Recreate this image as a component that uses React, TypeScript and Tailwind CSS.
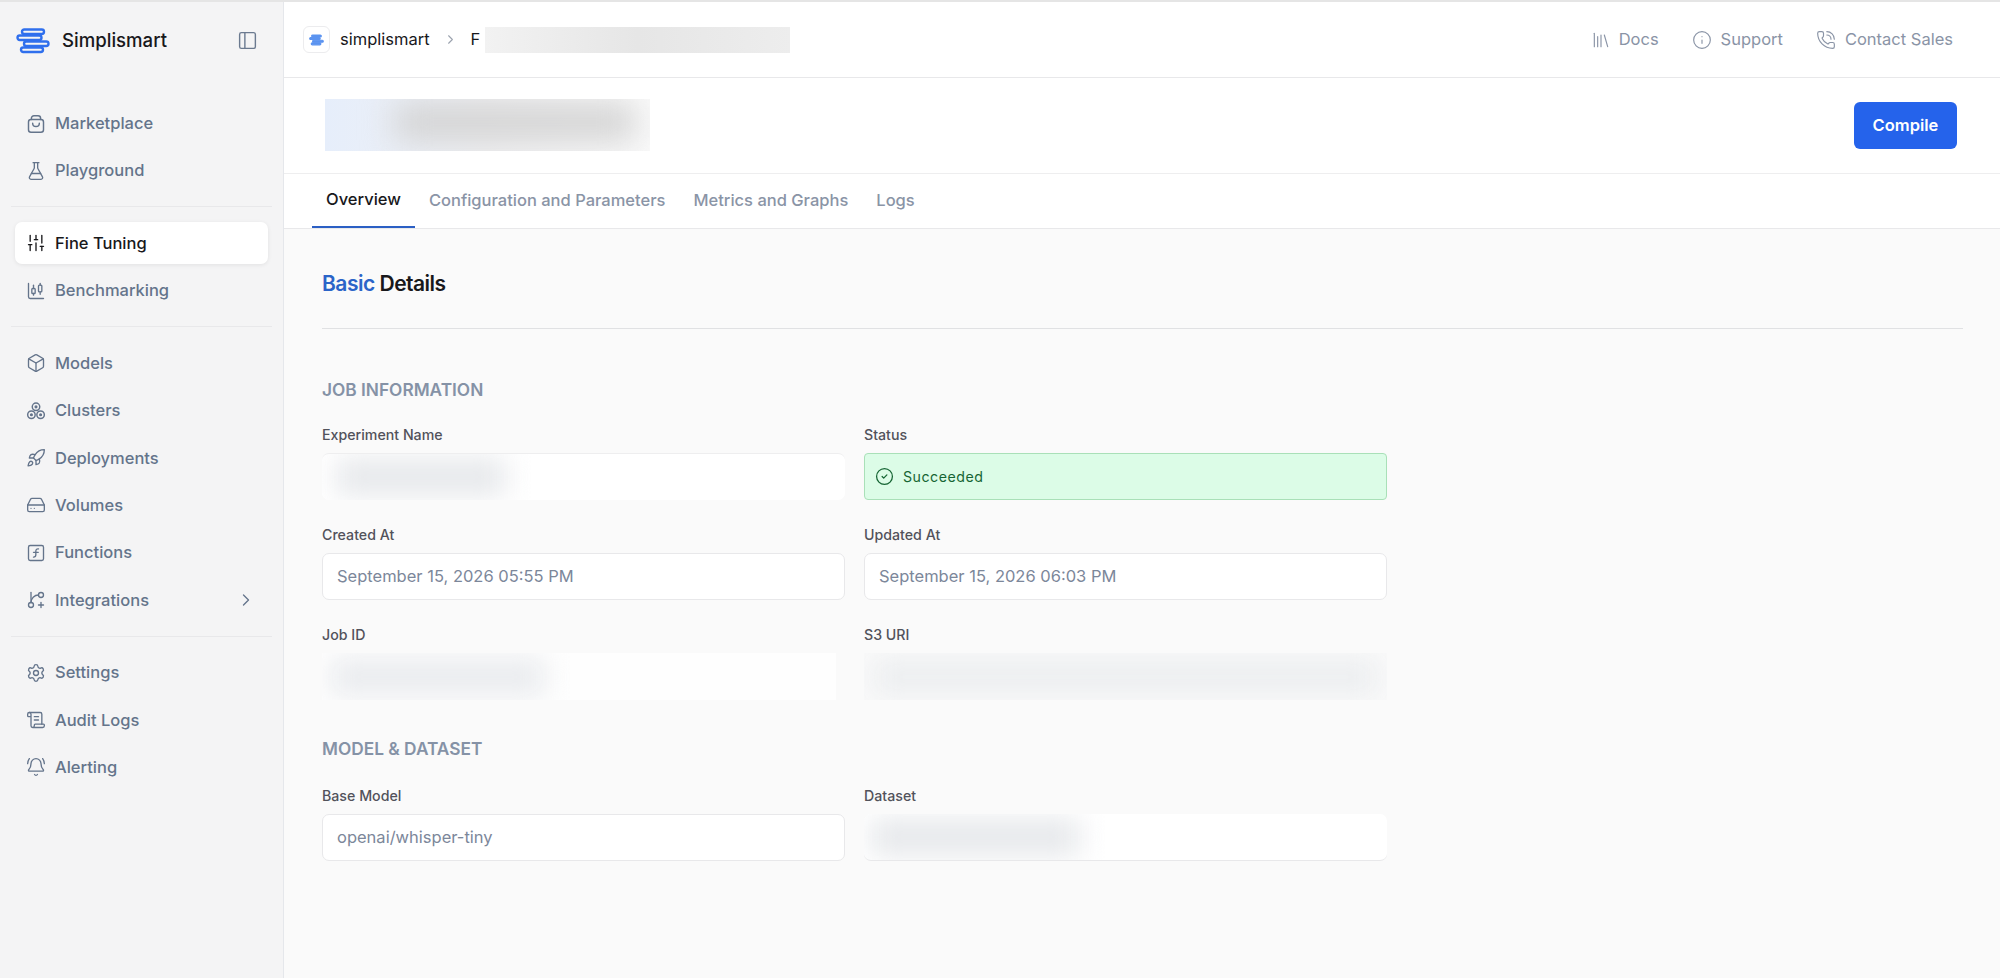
import React from 'react';
import {
  BellRing,
  Box,
  ChartCandlestick,
  ChevronRight,
  CircleCheck,
  FlaskConical,
  GitBranchPlus,
  HardDrive,
  Info,
  Library,
  PanelLeft,
  PhoneCall,
  Rocket,
  ScrollText,
  Settings,
  SlidersVertical,
  SquareFunction,
} from 'lucide-react';

const font = 'font-["Inter",sans-serif]';

const Logo = ({ small }: { small?: boolean }) => (
  <svg
    viewBox="0 0 34 26"
    className={small ? 'w-[15px] h-[12px]' : 'w-[34px] h-[26px]'}
    fill={small ? '#5b93f0' : 'none'}
    stroke={small ? '#5b93f0' : '#2f6fed'}
    strokeWidth="2.4"
  >
    <rect x="6" y="1.5" width="22" height="4.5" rx="2.25" />
    <rect x="1.5" y="7.5" width="24" height="4.5" rx="2.25" />
    <rect x="8" y="13.5" width="24.5" height="4.5" rx="2.25" />
    <rect x="5" y="19.5" width="22" height="4.5" rx="2.25" />
  </svg>
);

const BagIcon = ({ className }: { className?: string }) => (
  <svg viewBox="0 0 24 24" className={className} fill="none" stroke="currentColor" strokeWidth="1.75" strokeLinecap="round" strokeLinejoin="round">
    <path d="M6.5 6.5V5A3 3 0 0 1 9.5 2h5a3 3 0 0 1 3 3v1.5" />
    <rect x="3" y="6.5" width="18" height="15.5" rx="3" />
    <path d="M8 11a4 4 0 0 0 8 0" />
  </svg>
);

const ClusterIcon = ({ className }: { className?: string }) => (
  <svg viewBox="0 0 24 24" className={className} fill="none" stroke="currentColor" strokeWidth="1.75" strokeLinecap="round" strokeLinejoin="round">
    <circle cx="12" cy="7" r="4.5" />
    <circle cx="6.5" cy="16.5" r="4.5" />
    <circle cx="17.5" cy="16.5" r="4.5" />
    <circle cx="12" cy="7" r="1" />
    <circle cx="6.5" cy="16.5" r="1" />
    <circle cx="17.5" cy="16.5" r="1" />
  </svg>
);

type IconType = React.ComponentType<{ className?: string; strokeWidth?: number }>;

const groups: { label: string; icon: IconType; active?: boolean; arrow?: boolean }[][] = [
  [
    { label: 'Marketplace', icon: BagIcon },
    { label: 'Playground', icon: FlaskConical },
  ],
  [
    { label: 'Fine Tuning', icon: SlidersVertical, active: true },
    { label: 'Benchmarking', icon: ChartCandlestick },
  ],
  [
    { label: 'Models', icon: Box },
    { label: 'Clusters', icon: ClusterIcon },
    { label: 'Deployments', icon: Rocket },
    { label: 'Volumes', icon: HardDrive },
    { label: 'Functions', icon: SquareFunction },
    { label: 'Integrations', icon: GitBranchPlus, arrow: true },
  ],
  [
    { label: 'Settings', icon: Settings },
    { label: 'Audit Logs', icon: ScrollText },
    { label: 'Alerting', icon: BellRing },
  ],
];

const Sidebar = () => (
  <aside className="w-[284px] shrink-0 bg-[#f4f4f5] border-r border-[#e5e7eb] flex flex-col">
    <div className="h-[77px] flex items-center pl-[16px] pr-[25px]">
      <Logo />
      <span className="ml-[12px] text-[18.6px] font-medium text-[#18181b]">Simplismart</span>
      <PanelLeft className="ml-auto w-[21px] h-[21px] text-[#6b7a90]" strokeWidth={1.6} />
    </div>
    <nav className="pt-[23.5px] px-[11px] flex flex-col gap-[14.5px]">
      {groups.map((items, i) => (
        <div key={i} className={`flex flex-col gap-[5.35px] ${i > 0 ? 'border-t border-[#e8e8ea] pt-[15.1px]' : ''}`}>
          {items.map((item) => {
            const Icon = item.icon;
            return (
              <div
                key={item.label}
                className={`h-[42px] mx-[4px] px-[11px] rounded-[7px] flex items-center gap-[9px] text-[16.5px] font-medium ${
                  item.active ? 'bg-white shadow-[0_1px_4px_rgba(0,0,0,0.08)] text-[#18181b]' : 'text-[#64748b]'
                }`}
              >
                <Icon className="w-[20px] h-[20px] shrink-0" strokeWidth={1.6} />
                <span>{item.label}</span>
                {item.arrow && <ChevronRight className="ml-auto mr-[1px] w-[20px] h-[20px]" strokeWidth={1.6} />}
              </div>
            );
          })}
        </div>
      ))}
    </nav>
  </aside>
);

const TopBar = () => (
  <header className="h-[76px] shrink-0 bg-white border-b border-[#e8e8ea] flex items-center pl-[19px] pr-[47px]">
    <div className="w-[27px] h-[27px] rounded-[6px] border border-[#ececee] flex items-center justify-center">
      <Logo small />
    </div>
    <span className="ml-[10px] text-[16.5px] text-[#18181b]">simplismart</span>
    <ChevronRight className="ml-[13.5px] w-[15px] h-[15px] text-[#9ca3af]" strokeWidth={1.75} />
    <span className="ml-[12.5px] w-[14px] text-[16.5px] text-[#18181b]">F</span>
    <div className="w-[305px] h-[26px] bg-gradient-to-r from-[#f2f2f2] via-[#e6e6e6] to-[#ededed]" />
    <div className="ml-auto flex items-center gap-[33px] text-[16.5px] text-[#8a94a6]">
      <div className="flex items-center gap-[8px]">
        <Library className="w-[20px] h-[20px]" strokeWidth={1.4} />
        <span>Docs</span>
      </div>
      <div className="flex items-center gap-[9px]">
        <Info className="w-[20px] h-[20px]" strokeWidth={1.4} />
        <span>Support</span>
      </div>
      <div className="flex items-center gap-[9px]">
        <PhoneCall className="w-[20px] h-[20px]" strokeWidth={1.4} />
        <span>Contact Sales</span>
      </div>
    </div>
  </header>
);

const labelClass = 'h-[18px] text-[14.2px] leading-[18px] font-medium text-[#52525b]';

// value boxes in the reference are redacted with a soft smear, blobClass sets its extent
const Field = ({ label, value, boxClass, blobClass }: { label: string; value?: string; boxClass?: string; blobClass?: string }) => (
  <div className="flex flex-col">
    <label className={labelClass}>{label}</label>
    {value ? (
      <div className="mt-[9px] h-[47px] rounded-[7px] border border-[#e8e8ea] bg-white flex items-center px-[14px] text-[16.5px] text-[#7c879a]">
        {value}
      </div>
    ) : (
      <div className={`mt-[9px] h-[47px] overflow-hidden flex items-center ${boxClass}`}>
        <div className={`h-[38px] blur-[14px] ${blobClass}`} />
      </div>
    )}
  </div>
);

export default function App() {
  return (
    <div className={`${font} h-[978px] w-[2000px] overflow-hidden bg-[#fafafa] border-t-2 border-[#e5e5e5] flex`}>
      <Sidebar />
      <main className="flex-1 min-w-0 flex flex-col">
        <TopBar />
        <div className="h-[96px] shrink-0 bg-white border-b border-[#eeeeef] flex items-center justify-between pl-[41px] pr-[43px]">
          <div className="w-[325px] h-[52px] mb-[2px] overflow-hidden bg-gradient-to-r from-[#e6eefb] via-[#f0f0f2] to-[#fafafa] pl-[70px] pt-[5px]">
            <div className="w-[240px] h-[36px] bg-[#d2d2d2] blur-[16px]" />
          </div>
          <button className="h-[47px] w-[103px] rounded-[6px] bg-[#2563eb] text-white text-[16.5px] font-semibold">Compile</button>
        </div>
        <div className="h-[55px] shrink-0 bg-white border-b border-[#e8e8ea] flex pl-[28px] text-[16.5px] font-medium text-[#8a94a6]">
          <div className="px-[14px] pb-[1px] flex items-center text-[#18181b] border-b-2 border-[#2b5fc4]">Overview</div>
          <div className="px-[14px] pb-[1px] flex items-center">Configuration and Parameters</div>
          <div className="px-[14px] pb-[1px] flex items-center">Metrics and Graphs</div>
          <div className="px-[14px] pb-[1px] flex items-center">Logs</div>
        </div>
        <section className="pl-[38px] pr-[37px] pt-[40px]">
          <h2 className="text-[21px] leading-[30px] font-semibold tracking-[-0.5px] text-[#18181b]">
            <span className="text-[#2b64c8]">Basic</span> Details
          </h2>
          <div className="mt-[29px] border-t border-[#e0e1e3]" />
          <h3 className="mt-[50px] text-[17.3px] leading-[22px] font-semibold text-[#8592a6]">JOB INFORMATION</h3>
          <div className="mt-[25px] w-[1065px] grid grid-cols-2 gap-x-[19px] gap-y-[26px]">
            <Field label="Experiment Name" boxClass="bg-white rounded-[7px] border-t border-[#eeeeef] pl-[14px]" blobClass="w-[170px] bg-[#e6e8eb]" />
            <div className="flex flex-col">
              <label className={labelClass}>Status</label>
              <div className="mt-[9px] h-[47px] rounded-[4px] border border-[#a9e0b8] bg-[#dcfce7] flex items-center gap-[9px] px-[10px] text-[14.2px] tracking-[0.5px] text-[#166534]">
                <CircleCheck className="w-[19px] h-[19px]" strokeWidth={1.6} />
                <span>Succeeded</span>
              </div>
            </div>
            <Field label="Created At" value="September 15, 2026 05:55 PM" />
            <Field label="Updated At" value="September 15, 2026 06:03 PM" />
            <Field label="Job ID" boxClass="bg-white/80 pl-[8px] w-[514px]" blobClass="w-[215px] bg-[#e9ebee]" />
            <Field label="S3 URI" boxClass="px-[8px]" blobClass="w-full bg-[#eceef0]" />
          </div>
          <h3 className="mt-[38px] text-[17.3px] leading-[22px] font-semibold text-[#8592a6]">MODEL &amp; DATASET</h3>
          <div className="mt-[26.5px] w-[1065px] grid grid-cols-2 gap-x-[19px]">
            <Field label="Base Model" value="openai/whisper-tiny" />
            <Field label="Dataset" boxClass="bg-white rounded-[7px] border-b border-[#e8e8ea] pl-[6px]" blobClass="w-[210px] bg-[#e6e8eb]" />
          </div>
        </section>
      </main>
    </div>
  );
}
